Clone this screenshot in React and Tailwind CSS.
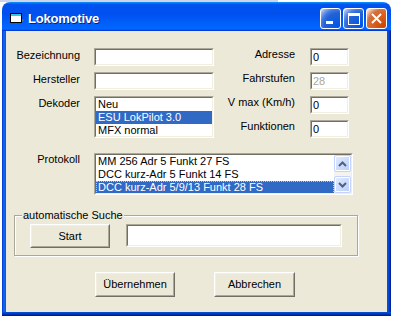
import React from 'react';

function Sunken({ className = '', inner = '', children }) {
  return (
    <div className={`border border-t-[#aca899] border-l-[#aca899] border-b-white border-r-white ${className}`}>
      <div className={`h-full border border-t-[#716f64] border-l-[#716f64] border-b-[#f1efe2] border-r-[#f1efe2] bg-white overflow-hidden ${inner}`}>
        {children}
      </div>
    </div>
  );
}

function Field({ value = '', disabled = false }) {
  return (
    <Sunken className="h-[18px]" inner={`px-[1px] leading-[14px] ${disabled ? 'text-[#aca899]' : 'text-black'}`}>
      {value}
    </Sunken>
  );
}

function Button({ className = '', children }) {
  return (
    <div className={`border border-t-white border-l-white border-b-[#716f64] border-r-[#716f64] ${className}`}>
      <div className="h-full flex items-center justify-center border border-t-[#f1efe2] border-l-[#f1efe2] border-b-[#aca899] border-r-[#aca899] bg-[#ece9d8]">
        {children}
      </div>
    </div>
  );
}

function Item({ selected = false, focus = false, children }) {
  return (
    <div
      className={`h-[13px] leading-[13px] px-[2px] whitespace-nowrap ${
        selected ? 'bg-[#316ac5] text-white' : 'text-black'
      } ${focus ? 'outline-1 outline-dotted outline-[#e8c070] -outline-offset-1' : ''}`}
    >
      {children}
    </div>
  );
}

function ScrollBtn({ up }) {
  return (
    <div className="w-[17px] h-[17px] rounded-[2px] border border-[#c3d3fd] bg-[linear-gradient(135deg,#e4ecfe,#b9cdf9)] shadow-[inset_0_0_0_1px_#fff] flex items-center justify-center">
      <svg width="9" height="6" viewBox="0 0 9 6">
        <path d={up ? 'M1 5 L4.5 1.5 L8 5' : 'M1 1 L4.5 4.5 L8 1'} stroke="#4d6185" strokeWidth="2" fill="none" />
      </svg>
    </div>
  );
}

function Label({ right = false, children }) {
  return (
    <div className={`text-right leading-[12px] whitespace-nowrap ${right ? 'pr-[15px]' : 'pr-[14px] pt-[1px]'}`}>
      {children}
    </div>
  );
}

export default function App() {
  return (
    <div className="w-[394px] h-[318px] bg-white overflow-hidden font-['Liberation_Sans',Arial,sans-serif] text-[11px] text-black">
      {/* desktop strip above window */}
      <div className="h-[2px] flex">
        <div className="w-[278px] bg-[#cdd3ea]"></div>
      </div>

      <div className="pl-[2px]">
        <div className="w-[389px] h-[314px] flex flex-col">
          {/* Title bar */}
          <div className="h-[29px] rounded-t-[8px] bg-[linear-gradient(180deg,#0997ff,#0053ee_8%,#0050ee_40%,#06f_88%,#06f_93%,#005bff_95%,#003dd7_96%,#003dd7)] flex items-start pt-[6px] pl-[8px] pr-[4px]">
            <div className="flex items-center h-[21px] gap-[4px] flex-1">
              <svg width="14" height="11" viewBox="0 0 14 11">
                <rect x="0.5" y="0.5" width="11" height="9" fill="#fff" stroke="#000" />
                <rect x="1" y="1" width="10" height="2" fill="#37c6d8" />
                <path d="M12 6 L14 7.5 L12 9 Z" fill="#7a7a7a" />
              </svg>
              <span className="pt-[1px] font-bold text-[13px] tracking-[-0.2px] text-white [text-shadow:1px_1px_#0a1e8c]">
                Lokomotive
              </span>
            </div>
            <div className="flex gap-[2px]">
              <div className="w-[21px] h-[21px] rounded-[3px] border border-white bg-[radial-gradient(circle_at_90%_90%,#0054e9_0%,#2263d5_55%,#4479e4_70%,#a3bbec_90%,#fff_100%)] flex items-end pl-[5px] pb-[4px]">
                <div className="w-[7px] h-[3px] bg-white"></div>
              </div>
              <div className="w-[21px] h-[21px] rounded-[3px] border border-white bg-[radial-gradient(circle_at_90%_90%,#0054e9_0%,#2263d5_55%,#4479e4_70%,#a3bbec_90%,#fff_100%)] flex items-center justify-center">
                <div className="w-[12px] h-[12px] border border-white border-t-[3px]"></div>
              </div>
              <div className="w-[21px] h-[21px] rounded-[3px] border border-white bg-[radial-gradient(circle_at_90%_90%,#cc4600_0%,#dc6527_55%,#cd7546_70%,#ffccb2_90%,#fff_100%)] flex items-center justify-center">
                <svg width="13" height="13" viewBox="0 0 13 13">
                  <path d="M2 2 L11 11 M11 2 L2 11" stroke="#fff" strokeWidth="2" />
                </svg>
              </div>
            </div>
          </div>

          {/* Frame + client */}
          <div className="flex h-[281px]">
            <div className="w-[4px] bg-linear-to-r from-[#0831d9] via-[#166aee] to-[#0855dd]"></div>
            <div className="w-[381px] bg-[#ece9d8] flex flex-col">
              <div className="grid grid-cols-[88px_120px_96px_39px] grid-rows-[18px_18px_18px_18px] gap-y-[6px] pt-[17px]">
                <Label>Bezeichnung</Label>
                <Field />
                <Label right>Adresse</Label>
                <Field value="0" />

                <Label>Hersteller</Label>
                <Field />
                <Label right>Fahrstufen</Label>
                <Field value="28" disabled />

                <Label>Dekoder</Label>
                <Sunken className="row-span-2">
                  <Item>Neu</Item>
                  <Item selected>ESU LokPilot 3.0</Item>
                  <Item>MFX normal</Item>
                </Sunken>
                <Label right>V max (Km/h)</Label>
                <Field value="0" />

                <div className="col-start-3">
                  <Label right>Funktionen</Label>
                </div>
                <Field value="0" />
              </div>

              <div className="flex mt-[15px]">
                <div className="w-[88px] -mt-px">
                  <Label>Protokoll</Label>
                </div>
                <Sunken className="w-[259px] h-[42px]" inner="flex">
                  <div className="flex-1">
                    <Item>MM 256 Adr 5 Funkt 27 FS</Item>
                    <Item>DCC kurz-Adr 5 Funkt 14 FS</Item>
                    <Item selected focus>DCC kurz-Adr 5/9/13 Funkt 28 FS</Item>
                  </div>
                  <div className="w-[17px] flex flex-col bg-[#f4f3ee]">
                    <ScrollBtn up />
                    <div className="flex-1"></div>
                    <ScrollBtn />
                  </div>
                </Sunken>
              </div>

              <fieldset className="ml-[8px] w-[344px] mt-[14px] p-0 border border-[#aca899] shadow-[inset_1px_1px_0_#fff,1px_1px_0_#fff]">
                <legend className="ml-[7px] px-[1px] leading-[12px] bg-[#ece9d8]">automatische Suche</legend>
                <div className="flex gap-[16px] px-[15px] pt-[3px] pb-[7px]">
                  <Button className="w-[80px] h-[24px]">Start</Button>
                  <Sunken className="w-[216px] h-[23px]" />
                </div>
              </fieldset>

              <div className="flex gap-[39px] pl-[89px] mt-[16px]">
                <Button className="w-[80px] h-[25px]">Übernehmen</Button>
                <Button className="w-[81px] h-[25px]">Abbrechen</Button>
              </div>
            </div>
            <div className="w-[4px] bg-linear-to-r from-[#0855dd] via-[#0046d5] to-[#00138c]"></div>
          </div>
          <div className="h-[4px] bg-linear-to-b from-[#0855dd] to-[#00138c]"></div>
        </div>
      </div>
    </div>
  );
}
